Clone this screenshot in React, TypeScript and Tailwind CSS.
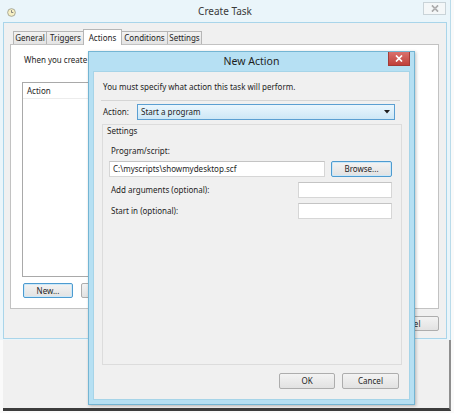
import clsx from "clsx"

const FONT = "font-['Noto_Sans',sans-serif]"

const Button: React.FC<{ label: string; className?: string; focused?: boolean }> = ({
  label,
  className,
  focused
}) => (
  <div
    className={clsx(
      "flex items-center justify-center rounded-[2px] border bg-linear-to-b from-[#f3f3f3] to-[#e2e2e2] text-[#1e1e1e] leading-none",
      focused ? "border-[#4d9bd0] shadow-[inset_0_0_0_1px_#cde8f8]" : "border-[#adadad]",
      className
    )}>
    {label}
  </div>
)

const TextBox: React.FC<{ value?: string; className?: string }> = ({ value, className }) => (
  <div
    className={clsx(
      "flex items-center bg-white border border-[#d6d6d6] border-t-[#c4c4c4] px-[3px] text-[#1e1e1e] leading-none",
      className
    )}>
    {value}
  </div>
)

const ClockIcon = () => (
  <svg width="9" height="9" viewBox="0 0 10 10">
    <circle cx="5" cy="5" r="4.3" fill="#f6efc4" stroke="#9a9a8a" strokeWidth="0.9" />
    <path d="M5 2.4V5h2" fill="none" stroke="#6d6d6d" strokeWidth="0.9" />
  </svg>
)

const tabs = [
  { label: "General", w: "w-[34px]" },
  { label: "Triggers", w: "w-[39px]" },
  { label: "Actions", w: "w-[39px]", active: true },
  { label: "Conditions", w: "w-[47px]" },
  { label: "Settings", w: "w-[35px]" }
]

export default function App() {
  return (
    <div className={clsx("relative w-[454px] h-[413px] bg-[#fafafa] overflow-hidden text-[8px]", FONT)}>
      {/* Create Task window */}
      <div className="absolute left-0 top-0 w-[451px] h-[411px] flex flex-col">
        <div className="h-[340px] flex flex-col bg-[#eaf5fa] px-[3px] pb-[1px] border-r border-[#b9dbea]">
          {/* title bar */}
          <div className="h-[22px] grid grid-cols-[1fr_auto_1fr] items-center">
            <div className="pl-[4px] pt-[2px]">
              <ClockIcon />
            </div>
            <div className="text-[10px] text-[#3a3a3a] mt-[1px]">Create Task</div>
            <div className="flex justify-end pr-[1px] -mt-[5px]">
              <div className="w-[23px] h-[13px] flex items-center justify-center border border-[#c9d3d8] bg-[#f4f7f8]">
                <svg width="8" height="7" viewBox="0 0 8 7">
                  <path d="M1 0.5l6 6M7 0.5l-6 6" stroke="#8f8f8f" strokeWidth="1.6" />
                  <path d="M1 0.5l6 6M7 0.5l-6 6" stroke="#f4f7f8" strokeWidth="0.5" />
                </svg>
              </div>
            </div>
          </div>
          {/* client area */}
          <div className="flex-1 flex flex-col border border-[#a9d5ea] bg-[#f0f0f0]">
            <div className="flex items-end pl-[9px] pt-[5px] h-[21px]">
              {tabs.map((t) =>
                t.active ? (
                  <div
                    key={t.label}
                    className={clsx(
                      t.w,
                      "relative z-10 -mb-px h-[16px] -mx-[1px] px-[1px] flex items-start justify-center pt-[2px] bg-white border border-b-0 border-[#b6b6b6] text-[#1e1e1e]"
                    )}>
                    {t.label}
                  </div>
                ) : (
                  <div
                    key={t.label}
                    className={clsx(
                      t.w,
                      "h-[13px] -mr-px flex items-center justify-center bg-linear-to-b from-[#f2f2f2] to-[#e4e4e4] border border-b-0 border-[#b6b6b6] text-[#1e1e1e] leading-none"
                    )}>
                    {t.label}
                  </div>
                )
              )}
            </div>
            {/* tab panel */}
            <div className="ml-[6px] w-[429px] h-[265px] bg-white border border-[#c2c2c2] flex flex-col pl-[11px]">
              <div className="pt-[9px] pl-[2px] leading-[12px] text-[#1e1e1e] whitespace-nowrap">
                When you create a task, you must specify the action
              </div>
              <div className="mt-[16px] w-[378px] h-[195px] border border-[#a9a9a9] bg-white">
                <div className="h-[16px] flex items-center pl-[4px] text-[#1e1e1e] border-b border-[#ececec]">
                  Action
                </div>
              </div>
              <div className="mt-[6px] flex gap-[8px] pl-[1px]">
                <Button label="New..." focused className="w-[50px] h-[15px]" />
                <Button label="Edit..." className="w-[50px] h-[15px]" />
              </div>
            </div>
            <div className="mt-[7px] flex justify-end gap-[8px] pr-[7px]">
              <Button label="OK" className="w-[57px] h-[15px]" />
              <Button label="Cancel" className="w-[62px] h-[15px]" />
            </div>
          </div>
        </div>
        <div className="flex-1 bg-[#f0f0f0] border-r-2 border-r-[#8e8e8e] border-b-[3px] border-b-[#3c3c3c] ml-[3px]" />
      </div>

      {/* New Action dialog */}
      <div className="absolute left-[88px] top-[51px] w-[327px] h-[354px] flex flex-col bg-[#b6e0f3] border border-[#74b5d3] shadow-[1px_1px_3px_rgba(0,0,0,0.25)]">
        <div className="relative h-[19px] flex items-center justify-center">
          <span className="text-[10.5px] text-[#1e1e1e]">New Action</span>
          <div className="absolute right-[4px] top-0 w-[22px] h-[14px] flex items-center justify-center bg-linear-to-b from-[#d9716d] to-[#c0403a] border border-[#a33b36] border-t-0">
            <svg width="8" height="7" viewBox="0 0 8 7">
              <path d="M1 0.5l6 6M7 0.5l-6 6" stroke="#ffffff" strokeWidth="1.7" />
            </svg>
          </div>
        </div>
        <div className="flex-1 mx-[4px] mb-[4px] flex flex-col bg-[#f0f0f0] border border-[#a6d4e8] text-[#1e1e1e]">
          <div className="pt-[9px] pl-[9px] leading-[12px]">You must specify what action this task will perform.</div>
          <div className="mt-[7px] ml-[7px] w-[299px] h-px bg-[#d5d5d5]" />
          <div className="mt-[3px] flex items-center pl-[9px]">
            <span className="w-[34px]">Action:</span>
            <div className="w-[258px] h-[16px] flex items-center justify-between px-[3px] border border-[#5b9fd2] bg-linear-to-b from-[#eaf6fd] to-[#cde7f6]">
              <span className="leading-none">Start a program</span>
              <svg width="6" height="4" viewBox="0 0 6 4" className="mr-[1px]">
                <path d="M0 0h6L3 3.5z" fill="#1e1e1e" />
              </svg>
            </div>
          </div>
          {/* settings group */}
          <div className="mt-[4px] ml-[8px] w-[300px] h-[241px] border border-[#dcdcdc] flex flex-col">
            <div className="pl-[4px] leading-[12px]">Settings</div>
            <div className="mt-[8px] pl-[8px] leading-[12px]">Program/script:</div>
            <div className="mt-[4px] pl-[6px] flex gap-[6px]">
              <TextBox value="C:\myscripts\showmydesktop.scf" className="w-[216px] h-[16px]" />
              <Button label="Browse..." focused className="w-[61px] h-[16px]" />
            </div>
            <div className="mt-[5px] flex items-center justify-between pl-[8px] pr-[9px]">
              <span>Add arguments (optional):</span>
              <TextBox className="w-[94px] h-[16px]" />
            </div>
            <div className="mt-[5px] flex items-center justify-between pl-[8px] pr-[9px]">
              <span>Start in (optional):</span>
              <TextBox className="w-[94px] h-[16px]" />
            </div>
          </div>
          <div className="mt-[8px] flex justify-end gap-[7px] pr-[10px]">
            <Button label="OK" className="w-[56px] h-[16px]" />
            <Button label="Cancel" className="w-[57px] h-[16px]" />
          </div>
        </div>
      </div>
    </div>
  )
}
